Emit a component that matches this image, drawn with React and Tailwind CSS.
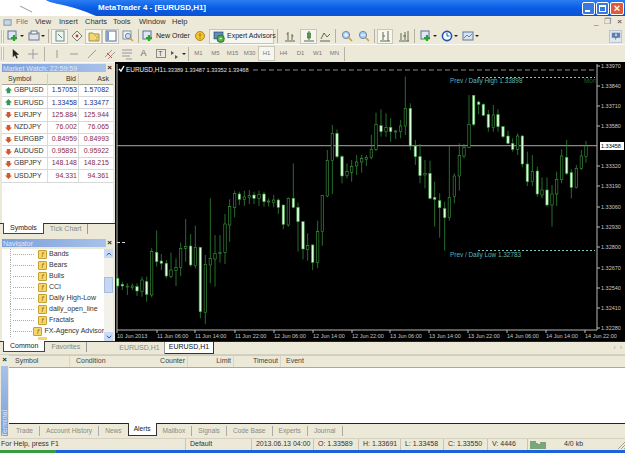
import { ChevronUp, ChevronDown } from "lucide-react";

const font = "font-['Liberation_Sans',Arial,sans-serif]";

// chart candles read off the picture: x, high, top, bottom, low, filled
const candlesA = [
  [8,612,625,648,655,1],[22,635,643,648,660,1],[37,640,648,650,675,0],[52,640,648,652,660,0],[66,640,650,663,678,1],
  [81,620,630,665,680,0],[95,620,635,673,695,1],[110,535,545,675,682,0],[125,482,547,575,590,1],[139,552,573,580,600,1],
  [154,570,580,618,625,1],[168,548,600,620,625,0],[183,565,593,602,648,0],[197,518,535,592,618,0],[212,447,530,535,575,0],
  [227,492,528,585,590,1],[241,467,532,587,595,0],[256,532,532,725,745,1],[271,555,583,728,762,0],[286,385,565,585,640,0],
  [300,495,550,567,650,0],[315,495,547,548,578,0],[330,432,462,547,582,0],[344,388,410,465,515,0],[359,362,370,412,442,0],
  [373,365,372,388,405,1],[388,362,381,388,408,0],[403,360,377,383,402,0],[417,365,375,385,402,1],[432,362,373,385,408,0],
  [447,365,372,395,410,1],[461,385,393,395,410,0],[476,375,390,398,412,0],[490,385,390,412,432,1],[505,405,405,463,478,1],
  [520,382,385,465,470,0],[535,280,385,412,415,1],[549,398,412,455,545,1],[564,455,455,537,568,1],[578,490,527,538,572,0],
  [593,522,525,577,600,1],[608,452,485,577,595,0],[622,375,377,485,527,0],[637,240,272,378,382,0],[652,165,190,272,372,0],
  [666,178,190,260,265,1],[681,255,260,318,340,1],[696,280,305,317,325,0],[710,270,290,307,335,0],[725,255,276,288,315,0],
  [740,255,266,276,308,0],
];
const candlesB = [
  [4,255,263,268,288,0],[19,195,238,262,268,0],[33,128,163,238,243,0],[48,118,167,185,200,1],[63,130,173,185,200,0],
  [77,145,172,185,215,1],[92,180,183,185,207,0],[107,150,168,185,205,0],[121,20,115,168,195,0],[136,100,115,228,240,1],
  [151,210,228,260,285,1],[165,222,260,317,340,1],[180,270,310,315,355,0],[195,272,310,385,388,1],[209,335,382,388,470,1],
  [224,370,392,413,503,1],[239,395,416,443,542,1],[253,228,382,443,452,0],[268,310,318,380,400,0],[283,220,257,318,362,0],
  [297,222,232,258,265,0],[312,75,163,232,235,0],[326,75,76,163,168,1],[341,92,96,103,133,1],[355,100,103,136,138,1],
  [370,120,133,172,185,1],[385,105,135,172,185,0],[399,118,134,170,185,1],[414,168,170,200,205,1],[429,182,198,220,222,1],
  [443,205,220,238,245,1],[458,190,198,238,255,0],[472,195,198,282,292,1],[487,245,282,335,348,1],[502,255,305,335,348,0],
  [517,290,303,372,380,1],[531,322,360,375,385,0],[546,322,360,405,410,1],[561,345,372,405,470,0],[575,305,328,372,408,0],
  [590,238,258,328,340,0],[605,210,262,310,315,1],[619,298,308,352,385,1],[634,285,295,352,355,0],[649,240,258,295,300,0],
  [663,213,228,260,278,0],
];

const prices = [
  ["1.33970",66],["1.33840",86],["1.33710",106],["1.33580",126],["1.33320",166],["1.33190",186],["1.33060",207],
  ["1.32930",227],["1.32800",247],["1.32670",268],["1.32540",288],["1.32410",308],["1.32280",328],
];
const times = [
  ["10 Jun 2013",117],["11 Jun 06:00",157],["11 Jun 14:00",195],["11 Jun 22:00",235],["12 Jun 06:00",274],["12 Jun 14:00",313],
  ["12 Jun 22:00",352],["13 Jun 06:00",390],["13 Jun 14:00",429],["13 Jun 22:00",468],["14 Jun 06:00",507],["14 Jun 14:00",546],["14 Jun 22:00",585],
];

const quotes = [
  ["GBPUSD","1.57053","1.57082",1],["EURUSD","1.33458","1.33477",1],["EURJPY","125.884","125.944",0],["NZDJPY","76.002","76.065",0],
  ["EURGBP","0.84959","0.84993",0],["AUDUSD","0.95891","0.95922",0],["GBPJPY","148.148","148.215",0],["USDJPY","94.331","94.361",0],
];
const indicators = ["Bands","Bears","Bulls","CCI","Daily High-Low","daily_open_line","Fractals","FX-Agency Advisor"];
const timeframes = [["M1",0],["M5",0],["M15",0],["M30",0],["H1",1],["H4",0],["D1",0],["W1",0],["MN",0]];
const termTabs = ["Trade","Account History","News","Alerts","Mailbox","Signals","Code Base","Experts","Journal"];

function Candle({ c, ox }) {
  const x = ox + c[0] / 3;
  const y = (v) => 70 + v / 3;
  return (
    <g>
      <line x1={x} x2={x} y1={y(c[1])} y2={y(c[4])} stroke="#2f8a35" strokeWidth="0.8" />
      <rect x={x - 1.2} y={y(c[2])} width="2.4" height={Math.max(y(c[3]) - y(c[2]), 1)} fill={c[5] ? "#dcffdc" : "#000"} stroke="#3f9c42" strokeWidth="0.6" />
    </g>
  );
}

function Chart() {
  return (
    <svg viewBox="115 62 510 279" className="block w-[510px] h-[279px]" fontFamily="Liberation Sans, Arial, sans-serif">
      <rect x="115" y="62" width="510" height="279" fill="#000" />
      <path d="M117 64V330H597V64" fill="none" stroke="#b8b8b8" strokeWidth="1" />
      <line x1="117" x2="597" y1="70" y2="70" stroke="#8a8a8a" strokeDasharray="5 3" />
      <line x1="117" x2="127" y1="242.500" y2="242.500" stroke="#ddd" strokeDasharray="3 2" />
      <line x1="117" x2="597" y1="145.700" y2="145.700" stroke="#a8a8a8" />
      <line x1="478" x2="595" y1="77.500" y2="77.500" stroke="#7fc8c0" strokeDasharray="2 2" />
      <line x1="478" x2="595" y1="250.500" y2="250.500" stroke="#7fc8c0" strokeDasharray="2 2" />
      {candlesA.map((c) => <Candle key={"a" + c[0]} c={c} ox={115} />)}
      {candlesB.map((c) => <Candle key={"b" + c[0]} c={c} ox={365} />)}
      <rect x="118" y="64" width="132" height="9" fill="#000" />
      <path d="M119 69l2 2 3-5" fill="none" stroke="#fff" strokeWidth="1.400" />
      <text x="126" y="71.500" fontSize="6.400" fill="#f0f0f0">EURUSD,H1</text>
      <text x="163" y="71.500" fontSize="5.600" fill="#e0e0e0">1.33389 1.33487 1.33352 1.33468</text>
      <text x="450" y="83" fontSize="6.400" fill="#5fb5ae">Prev / Daily High 1.33898</text>
      <text x="450" y="257" fontSize="6.400" fill="#5fb5ae">Prev / Daily Low 1.32783</text>
      <text x="584" y="83" fontSize="6.400" fill="#1f5f2a">Mon</text>
      {prices.map(([p, y]) => (
        <g key={p}>
          <line x1="597" x2="600" y1={y} y2={y} stroke="#bbb" />
          <text x="601" y={y + 2.300} fontSize="5.500" fill="#c8c8c8">{p}</text>
        </g>
      ))}
      <rect x="600" y="142" width="24" height="8" fill="#fff" />
      <text x="601" y="148" fontSize="5.500" fill="#000">1.33458</text>
      {times.map(([t, x]) => (
        <g key={t}>
          <line x1={x} x2={x} y1="330" y2="333" stroke="#bbb" />
          <text x={x} y="337.500" fontSize="5.500" fill="#c8c8c8">{t}</text>
        </g>
      ))}
    </svg>
  );
}

function Grip() {
  return <div className="w-[3px] h-[13px] mx-px border-x border-[#c4c1b0] bg-[#f8f7f0]" />;
}
function Sep({ className = "mx-[2px]" }) {
  return <div className={"w-px h-[14px] bg-[#b5b2a2] shrink-0 " + className} />;
}
function Drop() {
  return <span className="w-0 h-0 ml-px border-x-[2px] border-x-transparent border-t-[2px] border-t-[#222]" />;
}
function Btn({ w = "w-[17px]", on, children }) {
  return (
    <div className={"h-[15px] shrink-0 flex items-center justify-center " + w + (on ? " bg-[#f6f5ee] border border-[#c9c6b6]" : "")}>
      {children}
    </div>
  );
}
function Ico({ children, size = 12 }) {
  return (
    <svg viewBox="0 0 12 12" width={size} height={size} fill="none" strokeWidth="1" className="shrink-0">
      {children}
    </svg>
  );
}

const DocPlus = () => (
  <Ico>
    <rect x="1" y="1" width="8" height="8" fill="#dfe7f3" stroke="#5a7299" />
    <path d="M7 5v6M4 8h6" stroke="#27a327" strokeWidth="2.200" />
  </Ico>
);
const Stack = () => (
  <Ico>
    <rect x="1" y="3" width="10" height="7" fill="#dfe3ea" stroke="#66768f" />
    <rect x="3" y="1" width="6" height="3" fill="#f4f5f8" stroke="#66768f" />
  </Ico>
);
const Glass = ({ sign }) => (
  <Ico>
    <circle cx="5" cy="5" r="3.600" fill="#a9cdf0" stroke="#6a8ab0" />
    <path d="M7.600 7.600L11 11" stroke="#c9a040" strokeWidth="1.600" />
    {sign === "+" && <path d="M5 3v4M3 5h4" stroke="#fff" />}
    {sign === "-" && <path d="M3 5h4" stroke="#fff" />}
  </Ico>
);

function TopToolbar() {
  return (
    <div className="h-[17px] flex items-center border-b border-[#fbfaf4]">
      <Grip />
      <Btn w="w-[20px]"><DocPlus /><Drop /></Btn>
      <Btn w="w-[20px] ml-px"><Stack /><Drop /></Btn>
      <Sep />
      <Btn on>
        <Ico><rect x="2" y="1" width="8" height="10" fill="#eef3f8" stroke="#6d8a80" /><path d="M4 4l4 4" stroke="#4a8a4a" /></Ico>
      </Btn>
      <Btn>
        <Ico><path d="M6 1l5 5-5 5-5-5z" fill="#f4f2e6" stroke="#707a70" /><circle cx="6" cy="6" r="1.400" fill="#b04030" /></Ico>
      </Btn>
      <Btn on>
        <Ico><path d="M1 3h4l1 1h5v7H1z" fill="#f2d774" stroke="#a89040" /><path d="M7 5l1 2h2l-1.500 1.500L9 10.500 7 9.500" fill="#f7ec9e" stroke="#a89040" strokeWidth="0.600" /></Ico>
      </Btn>
      <Btn on>
        <Ico><rect x="1" y="1" width="10" height="10" fill="#fff" stroke="#5c6e8c" /><rect x="1.500" y="1.500" width="2.500" height="9" fill="#7e9cc8" /></Ico>
      </Btn>
      <Btn>
        <Ico><rect x="1" y="1" width="8" height="8" fill="#eef2f6" stroke="#8090a8" /><circle cx="6" cy="6" r="2.600" fill="#cfe0f0" stroke="#6a8ab0" /><path d="M8 8l3 3" stroke="#c9a040" strokeWidth="1.400" /></Ico>
      </Btn>
      <Sep className="mx-[2px]" />
      <Btn w="w-[50px] justify-start gap-[2px] pl-px">
        <DocPlus />
        <span className="text-[7px] text-[#222] whitespace-nowrap">New Order</span>
      </Btn>
      <Btn>
        <Ico><circle cx="6" cy="6" r="4.500" fill="#f2c230" stroke="#b08820" /><path d="M6 3.500v3M6 7.800v1" stroke="#7a5a10" /></Ico>
      </Btn>
      <Btn on w="w-[65px] ml-px justify-start gap-[2px] pl-[2px]">
        <Ico size={13}><rect x="2" y="2" width="8" height="6" fill="#5f8fc0" stroke="#3a6088" /><circle cx="8" cy="8" r="3.200" fill="#58b048" stroke="#2f7a2f" /><path d="M7 8h2" stroke="#fff" /></Ico>
        <span className="text-[7px] text-[#222] whitespace-nowrap">Expert Advisors</span>
      </Btn>
      <Sep className="mx-[3px]" />
      <Btn>
        <Ico><path d="M1 11h10M4 2v8M8 4v6M2.500 4H4M8 6h1.500" stroke="#5c6a50" /></Ico>
      </Btn>
      <Btn on w="w-[17px] ml-[2px]">
        <Ico><path d="M1 11h10M6 1v9" stroke="#5c6a50" /><rect x="4.500" y="3" width="3" height="5" fill="#4ca04c" stroke="#2f6a2f" strokeWidth="0.600" /></Ico>
      </Btn>
      <Btn w="w-[16px]">
        <Ico><path d="M1 11h10M2 9l3-6 3 4 3-3" stroke="#5c6a50" /></Ico>
      </Btn>
      <Sep />
      <Btn><Glass sign="+" /></Btn>
      <Btn><Glass sign="-" /></Btn>
      <Sep />
      <Btn on w="w-[16px]">
        <Ico><path d="M1 11h10M4 2v8M9 1v10M4 6h2" stroke="#5c6a50" /></Ico>
      </Btn>
      <Btn w="w-[17px] ml-[2px]">
        <Ico><path d="M1 11h10M3 3v7M7 2v8M10 1v10M5 6h3" stroke="#5c6a50" /></Ico>
      </Btn>
      <Sep />
      <Btn w="w-[20px] ml-px"><DocPlus /><Drop /></Btn>
      <Btn w="w-[20px] ml-px">
        <Ico><circle cx="6" cy="6" r="4.600" fill="#fff" stroke="#1d56b8" strokeWidth="1.600" /><path d="M6 3v3h2.500" stroke="#1d56b8" /></Ico>
        <Drop />
      </Btn>
      <Btn w="w-[20px] ml-px">
        <Ico><rect x="1" y="2" width="10" height="8" fill="#d8e4f0" stroke="#5f7896" /><path d="M2 8l3-3 2 2 3-3" stroke="#70849c" /></Ico>
        <Drop />
      </Btn>
      <div className="ml-auto mr-[3px] w-[13px] h-[13px] bg-[#dfe6ee] border border-[#bcc4cc] flex items-center justify-center">
        <svg viewBox="0 0 12 12" width="10" height="10"><path d="M1 2h10v6H7L5 11V8H1z" fill="#5b7fb2" /><path d="M6 3v3M5 5h2" stroke="#fff" /></svg>
      </div>
    </div>
  );
}

function DrawToolbar() {
  return (
    <div className="h-[17px] flex items-center text-[#777]">
      <Grip />
      <Btn w="w-[18px] ml-px">
        <svg viewBox="0 0 12 12" width="11" height="11"><path d="M3 1v9l2.300-2 1.700 3.500 1.500-.7L6.800 7.400H10z" fill="#222" /></svg>
      </Btn>
      <Btn w="w-[17px]">
        <Ico><path d="M6 1v10M1 6h10" stroke="#99a" /></Ico>
      </Btn>
      <Sep className="mx-[3px]" />
      <Btn><Ico><path d="M6 2v8" stroke="#999" /></Ico></Btn>
      <Btn w="w-[18px]"><Ico><path d="M2 6h8" stroke="#999" /></Ico></Btn>
      <Btn w="w-[18px]"><Ico><path d="M2 10l8-8" stroke="#999" /></Ico></Btn>
      <Btn><Ico><path d="M1 9L8 2M4 11l7-7" stroke="#999" /><path d="M3 5l5 5" stroke="#b05050" /></Ico></Btn>
      <Btn><Ico><path d="M1 2h10M1 5h10M1 8h8M5 11h6" stroke="#999" /></Ico></Btn>
      <Btn><span className="text-[9px] leading-none text-[#666]">A</span></Btn>
      <Btn w="w-[17px]">
        <div className="w-[10px] h-[9px] border border-[#888] flex items-center justify-center text-[7px] leading-none text-[#555]">T</div>
      </Btn>
      <Btn w="w-[17px]">
        <Ico><path d="M2 3l3 2-3 2zM6 7l3 2-3 2z" fill="#555" /></Ico>
        <Drop />
      </Btn>
      <Sep className="ml-[2px] mr-[1px]" />
      {timeframes.map(([t, on]) => (
        <div key={t} className={"w-[17px] h-[15px] shrink-0 flex items-center justify-center text-[6px] text-[#777] " + (on ? "bg-[#f6f5ee] border border-[#c9c6b6]" : "")}>
          {t}
        </div>
      ))}
      <Sep className="ml-[1px]" />
    </div>
  );
}

function PaneTitle({ children }) {
  return (
    <div className="mx-[2px] h-[8px] shrink-0 flex items-center justify-between">
      <div className="flex-1 h-full pl-px flex items-center bg-linear-to-r from-[#7b9fdc] to-[#a7c2ea] text-[7px] leading-none text-[#dfe9f8] whitespace-nowrap">
        {children}
      </div>
      <span className="w-[7px] text-center text-[8px] leading-none font-bold text-[#222]">×</span>
    </div>
  );
}

function PaneTabs({ tabs }) {
  return (
    <div className="flex items-start h-[12px] shrink-0 pl-[3px] text-[7px] border-t border-[#333]">
      <div className="h-[11px] -mt-px px-[6px] bg-white border-x border-b border-[#444] text-[#222] flex items-center">{tabs[0]}</div>
      <div className="h-[10px] px-[6px] text-[#8a8a80] flex items-center border-r border-[#999] whitespace-nowrap">{tabs[1]}</div>
    </div>
  );
}

function MarketWatch() {
  return (
    <div className="h-[171px] flex flex-col">
      <PaneTitle>Market Watch: 22:59:59</PaneTitle>
      <div className="mx-[2px] mt-[2px] flex-1 bg-white flex flex-col">
        <div className="h-[11px] grid grid-cols-[46px_31px_33px] items-center bg-[#ece9d8] text-[7px] text-[#333] border-b border-[#aca899]">
          <span className="pl-[6px] border-r border-[#d0cdbc]">Symbol</span>
          <span className="text-right pr-[2px] border-r border-[#d0cdbc]">Bid</span>
          <span className="text-right pr-[3px]">Ask</span>
        </div>
        {quotes.map(([s, b, a, up]) => (
          <div key={s} className="h-[12.200px] grid grid-cols-[46px_31px_33px] items-center border-b border-[#d8d8d8] text-[7px]">
            <span className="flex items-center gap-[2px] pl-[3px] text-[#333] border-r border-[#dcdcdc] h-full">
              <svg viewBox="0 0 8 8" width="7" height="7">
                {up ? <path d="M4 0l4 4H6v3H2V4H0z" fill="#2e9a5a" /> : <path d="M4 8L0 4h2V1h4v3h2z" fill="#d05a30" />}
              </svg>
              {s}
            </span>
            <span className={"pr-px border-r border-[#dcdcdc] h-full flex items-center justify-end " + (up ? "text-[#27307a]" : "text-[#8c2a3c]")}>{b}</span>
            <span className={"text-right pr-[3px] " + (up ? "text-[#27307a]" : "text-[#8c2a3c]")}>{a}</span>
          </div>
        ))}
      </div>
      <PaneTabs tabs={["Symbols", "Tick Chart"]} />
    </div>
  );
}

function Navigator() {
  return (
    <div className="pt-[4px] flex flex-col">
      <PaneTitle>Navigator</PaneTitle>
      <div className="mx-[2px] mt-[2px] h-[92px] shrink-0 bg-white flex overflow-hidden">
        <div className="flex-1 overflow-hidden">
          {indicators.map((n) => (
            <div key={n} className="h-[11px] flex items-center text-[7px] text-[#333] whitespace-nowrap">
              <div className="w-[29px] h-full ml-[8px] border-l border-dotted border-[#aaa] flex items-center">
                <div className="w-[21px] ml-[2px] border-t border-dotted border-[#aaa]" />
              </div>
              <span className="w-[9px] h-[9px] mr-[2px] -ml-[1px] shrink-0 bg-[#f5d66a] border border-[#c8a030] rounded-[1px] flex items-center justify-center text-[7px] leading-none italic text-[#8a6a10]">f</span>
              {n}
            </div>
          ))}
          <div className="h-[3px] ml-[36px] w-[9px] bg-[#f5d66a]" />
        </div>
        <div className="w-[9px] shrink-0 bg-[#f2f1ea] flex flex-col justify-between">
          <div className="h-[9px] bg-[#c8daf6] flex items-center justify-center"><ChevronUp size={8} strokeWidth={3} color="#3a5a90" /></div>
          <div className="h-[16px] -mt-[20px] bg-[#c4d6f4] border border-[#a8bce0]" />
          <div className="h-[9px] bg-[#c8daf6] flex items-center justify-center"><ChevronDown size={8} strokeWidth={3} color="#3a5a90" /></div>
        </div>
      </div>
      <PaneTabs tabs={["Common", "Favorites"]} />
    </div>
  );
}

function ChartTabs() {
  return (
    <div className="h-[13px] flex items-start text-[7px] border-t border-[#222]">
      <div className="w-[50px] h-[12px] flex items-center justify-center text-[#888] border-r border-[#999]">EURUSD,H1</div>
      <div className="w-[49px] h-[12px] flex items-center justify-center bg-white text-[#111] border-r border-b border-[#333]">EURUSD,H1</div>
      <span className="ml-auto mr-[3px] mt-[2px] text-[7px] leading-none text-[#aaa]">‹ &nbsp;›</span>
    </div>
  );
}

function Terminal() {
  return (
    <div className="flex h-[84px] shrink-0 border-t border-[#d4d1c0]">
      <div className="w-[9px] shrink-0 flex flex-col items-center">
        <span className="h-[11px] text-[8px] leading-[10px] font-bold text-[#222]">×</span>
        <div className="flex-1 w-[7px] mb-[2px] bg-linear-to-b from-[#a7c2ea] to-[#7b9fdc] flex items-end justify-center overflow-hidden">
          <span className="[writing-mode:vertical-rl] rotate-180 text-[7px] leading-none pb-px text-[#dfe9f8]">Terminal</span>
        </div>
      </div>
      <div className="flex-1 flex flex-col">
        <div className="h-[13px] flex items-center text-[7px] text-[#444] border-y border-[#d0cdbc] border-b-[#aca899]">
          <span className="w-[61px] pl-[6px] border-r border-[#d8d5c4]">Symbol</span>
          <span className="w-[86px] pl-[6px]">Condition</span>
          <span className="w-[32px] text-right pr-[2px] border-r border-[#d8d5c4]">Counter</span>
          <span className="w-[46px] text-right pr-[2px] border-r border-[#d8d5c4]">Limit</span>
          <span className="w-[47px] text-right pr-[2px] border-r border-[#d8d5c4]">Timeout</span>
          <span className="pl-[5px]">Event</span>
        </div>
        <div className="flex-1 bg-white border-b border-[#222]" />
        <div className="h-[14px] flex items-start text-[6.600px] text-[#8a8a80] pl-[1px]">
          {termTabs.map((t) => (
            t === "Alerts" ? (
              <span key={t} className="h-[13px] -mt-px -ml-px px-[5px] flex items-center bg-white text-[#222] border-x border-b border-[#333]">{t}</span>
            ) : (
              <span key={t} className="h-[10px] mt-[2px] px-[6px] flex items-center whitespace-nowrap border-r border-[#aaa]">{t}</span>
            )
          ))}
        </div>
      </div>
    </div>
  );
}

function StatusBar() {
  const cell = "h-full flex items-center border-l border-[#c8c5b4] pl-[2px]";
  return (
    <div className="h-[12px] shrink-0 flex items-center text-[7px] text-[#333] border-t border-[#d4d1c0] whitespace-nowrap">
      <div className="w-[185px] pl-px">For Help, press F1</div>
      <div className={cell + " w-[66px]"}>&nbsp;Default</div>
      <div className={cell + " w-[62px]"}>&nbsp;2013.06.13 04:00</div>
      <div className={cell + " w-[45px]"}>&nbsp;O: 1.33589</div>
      <div className={cell + " w-[42px]"}>&nbsp;H: 1.33691</div>
      <div className={cell + " w-[43px]"}>&nbsp;L: 1.33458</div>
      <div className={cell + " w-[44px]"}>&nbsp;C: 1.33550</div>
      <div className={cell + " w-[40px]"}>&nbsp;V: 4446</div>
      <div className={cell + " w-[36px]"}>
        <svg viewBox="0 0 16 8" width="16" height="8"><path d="M1 0v8M3 0v8M5 0v8M7 2v6M9 3v5M11 1v7M13 1v7M15 1v7" stroke="#2f7a3a" strokeWidth="1.200" /></svg>
      </div>
      <div className="w-[40px] pl-[1px]">4/0 kb</div>
      <svg viewBox="0 0 8 8" width="8" height="8" className="ml-auto"><path d="M8 1L1 8M8 4L4 8M8 7L7 8" stroke="#a8a594" /></svg>
    </div>
  );
}

export default function App() {
  return (
    <div className={"w-[625px] h-[453px] overflow-hidden flex flex-col bg-[#ece9d8] " + font}>
      <div className="relative h-[16px] shrink-0 flex items-center pl-[98px] bg-linear-to-b from-[#2a7df2] via-[#0a5ce4] to-[#0a52d6]">
        <svg viewBox="0 0 100 16" className="absolute left-0 top-0 w-[100px] h-[16px]">
          <path d="M0 0H46C50 4 70 4 96 16H0z" fill="#fff" />
          <path d="M20 6l12 6" stroke="#999" />
        </svg>
        <span className="relative text-[8px] font-bold text-white whitespace-nowrap">MetaTrader 4 - [EURUSD,H1]</span>
        <div className="ml-auto mr-px flex gap-[1px]">
          <div className="w-[13px] h-[13px] rounded-[2px] border border-white bg-[#3a78e0] flex items-end pl-[2px] pb-[2px]"><span className="block w-[5px] h-[2px] bg-white" /></div>
          <div className="w-[13px] h-[13px] rounded-[2px] border border-white bg-[#3a78e0] p-[2px]"><span className="block w-full h-full border border-white border-t-2" /></div>
          <div className="w-[14px] h-[13px] rounded-[2px] border border-white bg-[#e05a38] flex items-center justify-center text-[11px] leading-none font-bold text-white">×</div>
        </div>
      </div>
      <div className="h-[12px] shrink-0 flex items-center text-[7.500px] text-[#333]">
        <svg viewBox="0 0 10 10" width="9" height="9" className="ml-[3px]"><rect x="1" y="2" width="8" height="6" fill="#c8d4e8" stroke="#8090b0" /></svg>
        <span className="w-[23px] pl-[4px] text-[#777]">File</span>
        <span className="w-[24px]">View</span>
        <span className="w-[26px]">Insert</span>
        <span className="w-[28px]">Charts</span>
        <span className="w-[26px]">Tools</span>
        <span className="w-[33px]">Window</span>
        <span>Help</span>
        <span className="ml-auto mr-[3px] flex gap-[6px] text-[#666] text-[8px]"><span>_</span><span>❐</span><span className="font-bold">×</span></span>
      </div>
      <TopToolbar />
      <DrawToolbar />
      <div className="flex h-[292px] shrink-0">
        <div className="w-[115px] shrink-0 pt-px flex flex-col border-t border-[#fbfaf4]">
          <MarketWatch />
          <Navigator />
        </div>
        <div className="flex-1 flex flex-col">
          <Chart />
          <ChartTabs />
        </div>
      </div>
      <Terminal />
      <StatusBar />
      <div className="flex-1 flex bg-[#1c62d8]">
        <div className="w-[56px] bg-[#3a9a44]" />
      </div>
    </div>
  );
}
